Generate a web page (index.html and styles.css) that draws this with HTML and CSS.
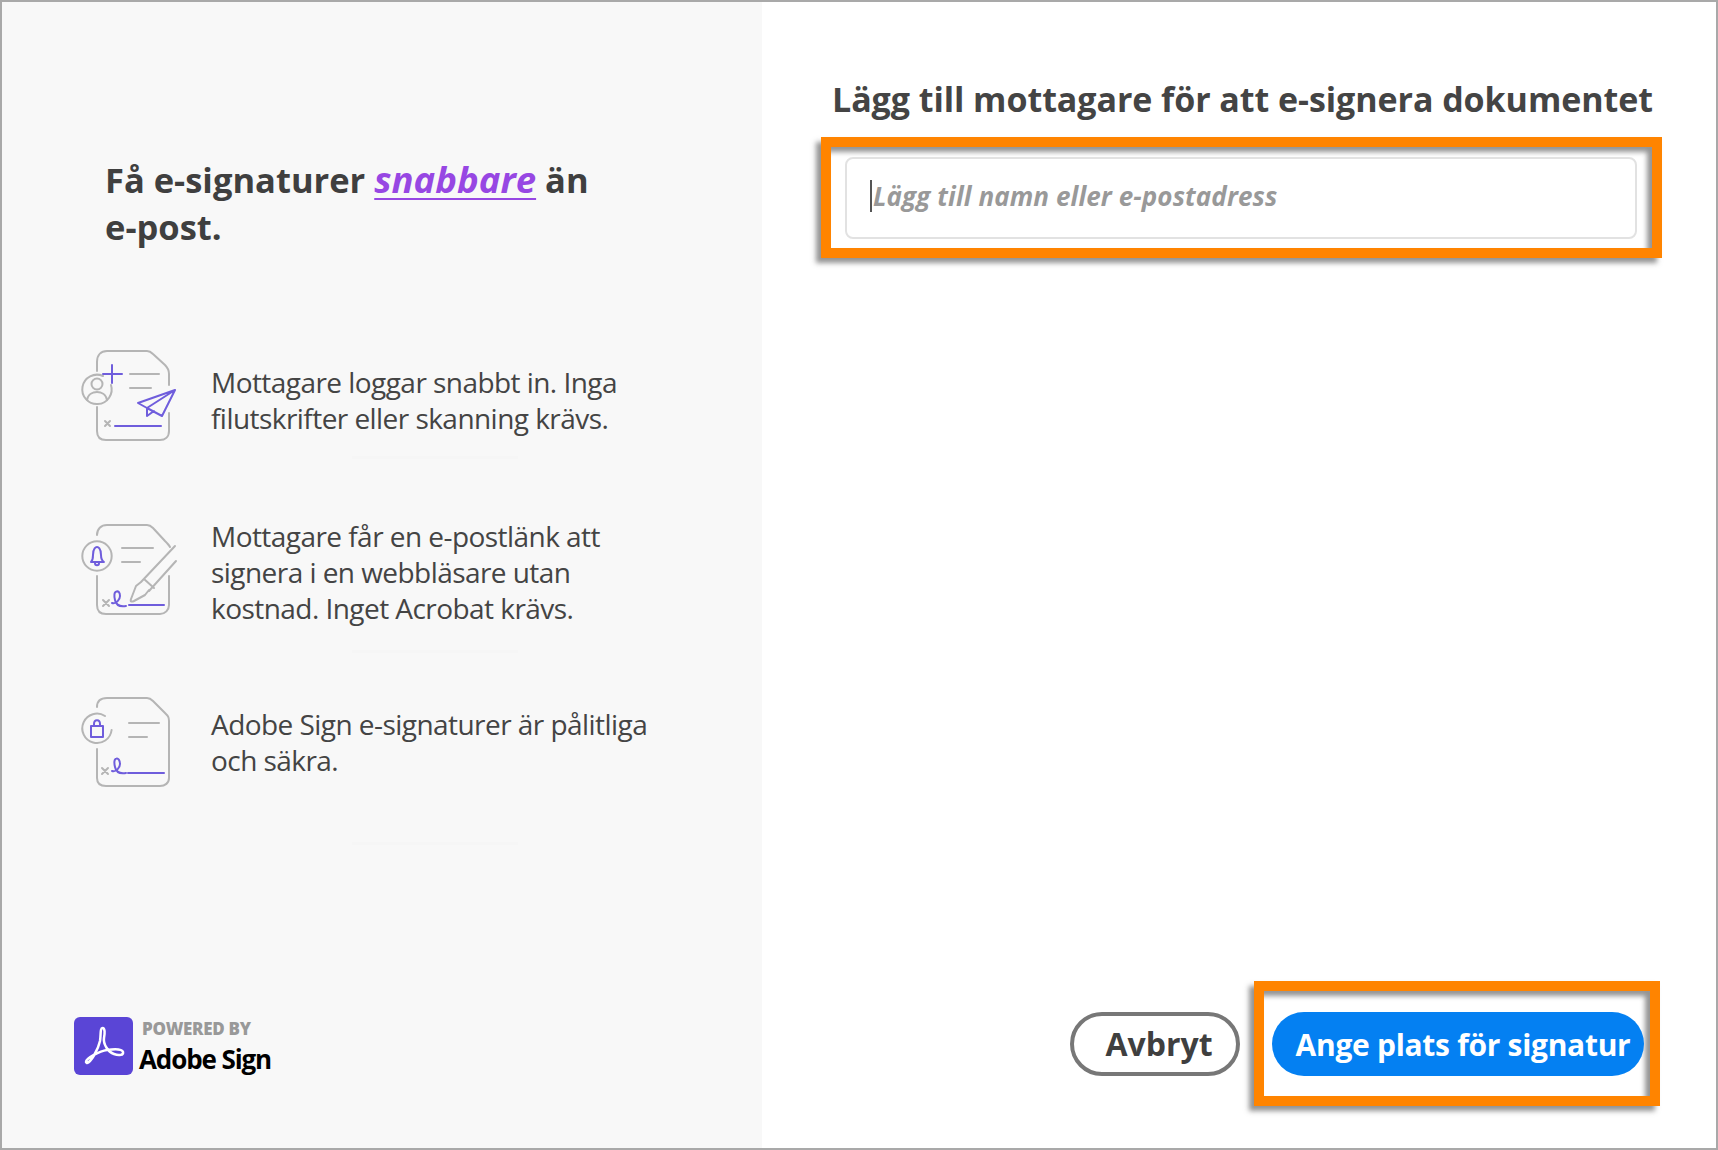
FILE: index.html
```html
<!DOCTYPE html>
<html lang="sv">
<head>
  <meta charset="UTF-8">
  <title>Lägg till mottagare</title>
  <link rel="stylesheet" href="styles.css">
</head>
<body>
<div class="page">

  <!-- Left info panel -->
  <section class="intro">
    <h1 class="intro-title">Få e-signaturer <a class="fast">snabbare</a> än<br>e-post.</h1>

    <div class="benefit benefit-one">
      <svg class="benefit-icon" viewBox="0 0 140 130" fill="none" stroke-linecap="round" stroke-linejoin="round">
        <g stroke="#b5b5b5" stroke-width="2">
          <path d="M37 42v-9c0-7 4-11 10-11h40c3 0 4 1 6 3l12 11c3 3 4 5 4 9v11"/>
          <path d="M109 84v18c0 6-4 9-9 9H46c-6 0-9-3-9-9V78"/>
          <path d="M70 45h29M70 59h21"/>
          <path d="M43 47a14.700 14.700 0 1 0 8 9"/>
          <circle cx="37" cy="55" r="5.500"/>
          <path d="M27 71c1-6 6-8 10-8s9 2 10 8"/>
          <path d="M45 92l5 5M50 92l-5 5"/>
        </g>
        <g stroke="#6f5ddc" stroke-width="2">
          <path d="M43 45h19M52 36v18"/>
          <path d="M55 97h46"/>
          <path d="M115 61L78 74l9 5zM115 61L87 79l15 8zM87 79v8l7-5"/>
        </g>
      </svg>
      <p class="benefit-text">Mottagare loggar snabbt in. Inga filutskrifter eller skanning krävs.</p>
    </div>

    <div class="benefit benefit-two">
      <svg class="benefit-icon" viewBox="0 0 140 130" fill="none" stroke-linecap="round" stroke-linejoin="round">
        <g stroke="#b5b5b5" stroke-width="2">
          <path d="M37 25c0-6 4-10 10-10h40c3 0 4 1 6 3l12 13c2 2 4 4 5 6"/>
          <path d="M109 66v29c0 5-4 9-9 9H46c-6 0-9-3-9-9V66"/>
          <path d="M62 38h31M62 52h18"/>
          <circle cx="37" cy="46" r="14.700"/>
          <path d="M43 90l6 6M49 90l-6 6"/>
          <path d="M115 36L81 72M116 51L89 81M84 69l10 9M81 72l-5 4-5 13c-1 3 1 3 3 2l11-6 4-5"/>
        </g>
        <g stroke="#6f5ddc" stroke-width="2">
          <path d="M31 52c2-2 2-4 2-7 0-7 3-8 4-8s4 1 4 8c0 3 0 5 3 7zM35 53c0 3 4 3 4 0"/>
          <path d="M52 93C56 94 60 90 60 86C60 82 58 81 56.500 81.500C54 82 54 86 55 90C56 95 60 97 66 96"/>
          <path d="M69 95h35"/>
        </g>
      </svg>
      <p class="benefit-text">Mottagare får en e-postlänk att signera i en webbläsare utan kostnad. Inget Acrobat krävs.</p>
    </div>

    <div class="benefit benefit-three">
      <svg class="benefit-icon" viewBox="0 0 140 130" fill="none" stroke-linecap="round" stroke-linejoin="round">
        <g stroke="#b5b5b5" stroke-width="2">
          <path d="M37 27c0-6 4-9 10-9h40c3 0 4 1 6 3l12 12c3 3 4 4 4 8v57c0 5-4 8-9 8H46c-6 0-9-3-9-8V69"/>
          <path d="M69 43h30M69 57h18"/>
          <path d="M45 36A14.700 14.700 0 1 0 51.600 50"/>
          <path d="M42 88l6 6M48 88l-6 6"/>
        </g>
        <g stroke="#6f5ddc" stroke-width="2">
          <path d="M31 46h12v11H31zM34 46v-2c0-5 6-5 6 0v2"/>
          <path d="M52 91C56 92 60 88 60 84C60 80 58 78 56.500 78.500C54 79 54 83 55 87C56 92 60 94 66 93"/>
          <path d="M68 93h36"/>
        </g>
      </svg>
      <p class="benefit-text">Adobe Sign e-signaturer är pålitliga och säkra.</p>
    </div>

    <div class="powered">
      <svg class="powered-logo" viewBox="0 0 59 58">
        <rect width="59" height="58" rx="6" fill="#5a45d6"/>
        <path d="M13 46C17 45 24 33 26 24C27 18 26 11 28.500 11C31 11 31 16 30 21C29 27 34 35 40 37C45 39 50 38 49 35C48 32 40 32 33 33C26 34 12 41 12 45Z" fill="none" stroke="#fff" stroke-width="2.500" stroke-linejoin="round"/>
      </svg>
      <div class="powered-text">
        <div class="powered-by">POWERED BY</div>
        <div class="powered-name">Adobe Sign</div>
      </div>
    </div>
  </section>

  <!-- Right form panel -->
  <section class="recipients">
    <h2 class="recipients-title">Lägg till mottagare för att e-signera dokumentet</h2>

    <div class="callout callout-input">
      <div class="recipient-input"><span class="caret"></span>Lägg till namn eller e-postadress</div>
    </div>

    <div class="actions">
      <button class="btn btn-cancel">Avbryt</button>
      <div class="callout callout-button">
        <button class="btn btn-primary">Ange plats för signatur</button>
      </div>
    </div>
  </section>

</div>
</body>
</html>
```

FILE: styles.css
```css
* {
  box-sizing: border-box;
}
body {
  margin: 0;
  font-family: "Open Sans", sans-serif;
  color: #444;
  background: #fff;
}

.page {
  display: flex;
  width: 1718px;
  height: 1150px;
  border: 2px solid #a9a9a9;
}

/* Left panel */
.intro {
  display: flex;
  flex-direction: column;
  width: 760px;
  padding-left: 58px;
  background: #f8f8f8;
}
.intro-title {
  width: 560px;
  margin: 154px 0 79px 45px;
  font-size: 34.500px;
  line-height: 47px;
  font-weight: 700;
  color: #3f3f3f;
}
.fast {
  font-size: 36.500px;
  font-style: italic;
  color: #9747e3;
  text-decoration: underline;
  text-decoration-thickness: 2px;
  text-underline-offset: 5px;
}

.benefit {
  position: relative;
  display: flex;
  align-items: flex-start;
  height: 130px;
}
/* very faint rule under each row */
.benefit::after {
  content: "";
  position: absolute;
  left: 292px;
  width: 166px;
  height: 3px;
  background: #f6f6f6;
}
.benefit-one {
  margin-bottom: 51px;
}
.benefit-one::after {
  bottom: 0;
}
.benefit-two {
  margin-bottom: 40px;
}
.benefit-two::after {
  bottom: -13px;
}
.benefit-three::after {
  bottom: -35px;
}
.benefit-icon {
  flex: none;
  width: 140px;
  height: 130px;
}
.benefit-text {
  width: 460px;
  margin: 0 0 0 11px;
  font-size: 28px;
  line-height: 36px;
  letter-spacing: -0.55px;
  color: #444;
}
.benefit-one .benefit-text {
  padding-top: 35px;
}
.benefit-two .benefit-text {
  padding-top: 8px;
}
.benefit-three .benefit-text {
  padding-top: 26px;
}

.powered {
  display: flex;
  align-items: center;
  gap: 6px;
  margin-top: auto;
  margin-bottom: 72px;
  margin-left: 14px;
}
.powered-logo {
  width: 59px;
  height: 58px;
}
.powered-text {
  padding-top: 4px;
}
.powered-by {
  padding-left: 3px;
  font-size: 17px;
  line-height: 20px;
  font-weight: 800;
  color: #999;
  letter-spacing: -0.3px;
}
.powered-name {
  margin-top: 3px;
  font-size: 26px;
  line-height: 34px;
  font-weight: 700;
  color: #000;
  letter-spacing: -1.1px;
}

/* Right panel */
.recipients {
  display: flex;
  flex: 1;
  flex-direction: column;
}
.recipients-title {
  margin: 73px 0 14px 70px;
  font-size: 34px;
  line-height: 48px;
  font-weight: 700;
  color: #444;
  letter-spacing: -0.06px;
  white-space: nowrap;
}

/* Orange highlight drawn over the screenshot */
.callout {
  border: 10px solid #ff8400;
  box-shadow: -5px 5px 5px rgba(90, 90, 90, 0.65), inset -5px 5px 5px rgba(90, 90, 90, 0.65);
}
.callout-input {
  width: 841px;
  margin-left: 59px;
  padding: 10px 15px 9px 14px;
}
.recipient-input {
  display: flex;
  align-items: center;
  height: 82px;
  padding: 0 0 4px 23px;
  border: 2px solid #e2e2e2;
  border-radius: 8px;
  font-size: 26px;
  font-weight: 700;
  font-style: italic;
  letter-spacing: 0.1px;
  color: #999;
  background: #fff;
}
.caret {
  width: 2px;
  height: 32px;
  margin-right: 1px;
  background: #555;
}

.actions {
  display: flex;
  align-items: center;
  justify-content: flex-end;
  gap: 14px;
  margin-top: auto;
  padding-right: 56px;
  padding-bottom: 42px;
}
.callout-button {
  width: 406px;
  padding: 21px 6px 20px 8px;
}
.btn {
  height: 64px;
  border-radius: 32px;
  font-family: "Open Sans", sans-serif;
  font-size: 30px;
  font-weight: 700;
}
.btn-cancel {
  width: 170px;
  padding-left: 14px;
  border: 4px solid #777;
  font-size: 32px;
  color: #3f3f3f;
  background: #fff;
}
.btn-primary {
  width: 372px;
  padding-left: 16px;
  border: none;
  letter-spacing: -0.3px;
  color: #fff;
  background: #0480f2;
  white-space: nowrap;
}
```
